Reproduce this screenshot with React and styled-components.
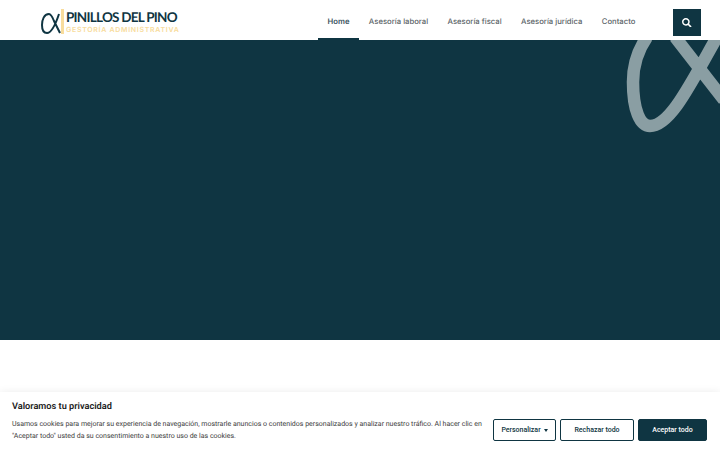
import React from 'react'
import styled, { createGlobalStyle } from 'styled-components'
import { FaSearch } from 'react-icons/fa'

const GlobalStyle = createGlobalStyle`
  html, body {
    margin: 0;
    padding: 0;
    background: #fff;
    text-rendering: geometricPrecision;
  }
  * {
    box-sizing: border-box;
  }
`

const Page = styled.div`
  width: 720px;
  height: 450px;
  overflow: hidden;
  position: relative;
  background: #fff;
`

// header
const Header = styled.header`
  display: flex;
  align-items: center;
  justify-content: space-between;
  height: 40px;
  padding: 0 19px 0 40px;
  background: #fff;
`

const Logo = styled.a`
  display: flex;
  align-items: center;
  gap: 2px;
  margin-top: 4px;
`

const LogoText = styled.div`
  display: flex;
  flex-direction: column;
  gap: 2px;
`

const LogoName = styled.span`
  font-family: 'Lato', sans-serif;
  font-size: 13.5px;
  line-height: 14px;
  font-weight: 700;
  letter-spacing: -0.75px;
  color: #0f3542;
  white-space: nowrap;
`

const LogoTag = styled.span`
  font-family: 'Inter', sans-serif;
  font-size: 7px;
  line-height: 8px;
  font-weight: 600;
  letter-spacing: 0.7px;
  color: #f8dc9c;
  white-space: nowrap;
`

const HeaderRight = styled.div`
  display: flex;
  align-items: center;
  gap: 28px;
`

const Nav = styled.nav`
  display: flex;
  align-items: stretch;
  height: 40px;
`

const NavItem = styled.a`
  display: flex;
  align-items: center;
  padding: 5px 9.7px 0;
  font-family: 'Inter', sans-serif;
  font-size: 7.7px;
  font-weight: ${({ $active }) => ($active ? 600 : 500)};
  color: ${({ $active }) => ($active ? '#3c5560' : '#5b6468')};
  border-bottom: 2px solid ${({ $active }) => ($active ? '#0f3542' : 'transparent')};
  white-space: nowrap;
`

const SearchButton = styled.button`
  display: flex;
  align-items: center;
  justify-content: center;
  width: 28px;
  height: 27px;
  margin-top: 5px;
  padding: 0;
  border: 0;
  background: #0f3542;
  color: #fff;
  font-size: 9.5px;
`

// hero
const Hero = styled.section`
  position: relative;
  height: 300px;
  overflow: hidden;
  background: #0f3542;
`

const HeroMark = styled.svg`
  position: absolute;
  top: 0;
  right: 0;
  width: 100px;
  height: 100px;
`

// cookie banner
const CookieBanner = styled.div`
  position: absolute;
  left: 0;
  right: 0;
  bottom: 0;
  height: 58px;
  display: flex;
  align-items: flex-end;
  justify-content: space-between;
  padding: 0 13px 8px 12px;
  background: #fff;
  box-shadow: 0 0 8px rgba(0, 0, 0, 0.08);
`

const CookieText = styled.div`
  width: 474px;
  font-family: 'Roboto', sans-serif;
`

const CookieTitle = styled.div`
  margin-bottom: 5px;
  font-size: 9.2px;
  line-height: 12px;
  font-weight: 600;
  color: #212121;
`

const CookieBody = styled.p`
  margin: 0;
  font-size: 7px;
  line-height: 12px;
  color: #3d3d3d;
`

const CookieButtons = styled.div`
  display: flex;
  gap: 4px;
  margin-bottom: 1px;
`

const CookieButton = styled.button`
  display: flex;
  align-items: center;
  justify-content: center;
  gap: 3px;
  width: ${({ $width }) => $width}px;
  height: 22px;
  padding: 0;
  border: 1px solid #0f3542;
  border-radius: 2px;
  background: ${({ $filled }) => ($filled ? '#0f3542' : '#fff')};
  color: ${({ $filled }) => ($filled ? '#fff' : '#0f3542')};
  font-family: 'Roboto', sans-serif;
  font-size: 7px;
  font-weight: 500;
`

const Caret = styled.span`
  width: 0;
  height: 0;
  border-left: 2.5px solid transparent;
  border-right: 2.5px solid transparent;
  border-top: 3px solid #0f3542;
`

const navItems = ['Home', 'Asesoría laboral', 'Asesoría fiscal', 'Asesoría jurídica', 'Contacto']

const App = () => (
  <Page>
    <GlobalStyle />
    <Header>
      <Logo>
        <svg width="24" height="27" viewBox="0 0 24 27">
          <path d="M20 24 L14 12 C12 7 11 5 9 5 C4 5 2 11 2 16 C2 22 4 24 7 24 C11 24 15 17 19 5" fill="none" stroke="#0f3542" strokeWidth="2" />
          <rect x="21" y="0" width="3" height="25" fill="#f8dc9c" />
        </svg>
        <LogoText>
          <LogoName>PINILLOS DEL PINO</LogoName>
          <LogoTag>GESTORÍA ADMINISTRATIVA</LogoTag>
        </LogoText>
      </Logo>
      <HeaderRight>
        <Nav>
          {navItems.map((item, i) => (
            <NavItem key={item} $active={i === 0}>{item}</NavItem>
          ))}
        </Nav>
        <SearchButton aria-label="Buscar"><FaSearch /></SearchButton>
      </HeaderRight>
    </Header>
    <Hero>
      <HeroMark viewBox="0 0 100 100">
        <path d="M27 -3 C18 10 13 25 13 42 C13 70 20 86 30 86 C50 86 70 45 97 -3 M55 -3 L104 60" fill="none" stroke="#8a9ea3" strokeWidth="12.5" />
      </HeroMark>
    </Hero>
    <CookieBanner>
      <CookieText>
        <CookieTitle>Valoramos tu privacidad</CookieTitle>
        <CookieBody>
          Usamos cookies para mejorar su experiencia de navegación, mostrarle anuncios o contenidos personalizados y analizar nuestro tráfico. Al hacer clic en "Aceptar todo" usted da su consentimiento a nuestro uso de las cookies.
        </CookieBody>
      </CookieText>
      <CookieButtons>
        <CookieButton $width={63}>Personalizar <Caret /></CookieButton>
        <CookieButton $width={74}>Rechazar todo</CookieButton>
        <CookieButton $width={69} $filled>Aceptar todo</CookieButton>
      </CookieButtons>
    </CookieBanner>
  </Page>
)

export default App
